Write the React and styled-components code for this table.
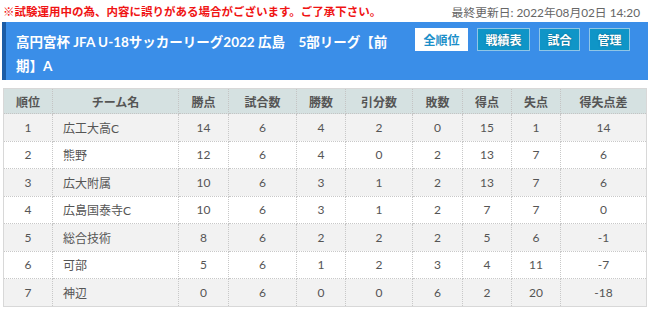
import React from "react";
import styled, { createGlobalStyle } from "styled-components";

const GlobalStyle = createGlobalStyle`
  body {
    margin: 0;
    background: #fff;
    font-family: Lato, "Noto Sans CJK JP", sans-serif;
  }
`;

const Page = styled.div`
  width: 650px;
  padding: 0 2px;
  box-sizing: border-box;
`;

const Notice = styled.div`
  height: 22px;
  display: flex;
  align-items: center;
  justify-content: space-between;
  padding: 0 8px 0 1px;
`;

const Warning = styled.span`
  color: #f01414;
  font-size: 11.5px;
  font-weight: bold;
`;

const Updated = styled.span`
  color: #666;
  font-size: 11.8px;
`;

const HeaderBox = styled.div`
  display: flex;
  justify-content: space-between;
  align-items: flex-start;
  background: #3a8ee8;
  border-left: 4px solid #1b5ca6;
  padding: 6px 18px 2px 10px;
`;

const Title = styled.h1`
  margin: 2px 0 0;
  width: 375px;
  color: #fff;
  font-size: 13.5px;
  font-weight: bold;
  line-height: 24px;
  line-break: anywhere;
  word-break: break-all;
`;

const Nav = styled.div`
  display: flex;
  gap: 9px;
`;

const NavButton = styled.a`
  display: flex;
  align-items: center;
  justify-content: center;
  height: 23px;
  padding: 0 7.5px;
  box-sizing: border-box;
  font-size: 12px;
  font-weight: bold;
  text-decoration: none;
  border: 1px solid ${(p) => (p.$active ? "#fff" : "#8fc6e6")};
  background: ${(p) => (p.$active ? "#fff" : "#0f95c7")};
  color: ${(p) => (p.$active ? "#1b8fc9" : "#fff")};
  text-shadow: ${(p) => (p.$active ? "none" : "0 0 2px rgba(0,0,0,0.35)")};
`;

const Table = styled.table`
  margin: 8px 0 0 1px;
  width: 643px;
  border-collapse: collapse;
  table-layout: fixed;
  border: 1px solid #d8d8d8;
  font-size: 12px;
  color: #555;
`;

const Th = styled.th`
  height: 24px;
  padding: 0;
  background: #d5e1e1;
  font-weight: bold;
  border: 1px dotted #c4c4c4;
  text-align: center;
`;

const Row = styled.tr`
  height: 27.5px;
  background: ${(p) => (p.$odd ? "#f2f2f2" : "#fff")};
`;

const Td = styled.td`
  padding: 0 ${(p) => (p.$left ? "10px" : "0")};
  border: 1px dotted #c8c8c8;
  text-align: ${(p) => (p.$left ? "left" : "center")};
`;

const columns = [
  ["順位", 49],
  ["チーム名", 126],
  ["勝点", 50],
  ["試合数", 68],
  ["勝数", 49],
  ["引分数", 67],
  ["敗数", 50],
  ["得点", 49],
  ["失点", 49],
  ["得失点差", 86],
];

const rows = [
  [1, "広工大高C", 14, 6, 4, 2, 0, 15, 1, 14],
  [2, "熊野", 12, 6, 4, 0, 2, 13, 7, 6],
  [3, "広大附属", 10, 6, 3, 1, 2, 13, 7, 6],
  [4, "広島国泰寺C", 10, 6, 3, 1, 2, 7, 7, 0],
  [5, "総合技術", 8, 6, 2, 2, 2, 5, 6, -1],
  [6, "可部", 5, 6, 1, 2, 3, 4, 11, -7],
  [7, "神辺", 0, 6, 0, 0, 6, 2, 20, -18],
];

const App = () => {
  return (
    <Page>
      <GlobalStyle />
      <Notice>
        <Warning>※試験運用中の為、内容に誤りがある場合がございます。ご了承下さい。</Warning>
        <Updated>最終更新日: 2022年08月02日 14:20</Updated>
      </Notice>
      <HeaderBox>
        <Title>高円宮杯 JFA U-18サッカーリーグ2022 広島　5部リーグ【前期】A</Title>
        <Nav>
          <NavButton $active>全順位</NavButton>
          <NavButton>戦績表</NavButton>
          <NavButton>試合</NavButton>
          <NavButton>管理</NavButton>
        </Nav>
      </HeaderBox>
      <Table>
        <colgroup>
          {columns.map(([name, w]) => (
            <col key={name} style={{ width: w }} />
          ))}
        </colgroup>
        <thead>
          <tr>
            {columns.map(([name]) => (
              <Th key={name}>{name}</Th>
            ))}
          </tr>
        </thead>
        <tbody>
          {rows.map((r, i) => (
            <Row key={r[0]} $odd={i % 2 === 0}>
              {r.map((v, j) => (
                <Td key={j} $left={j === 1}>
                  {v}
                </Td>
              ))}
            </Row>
          ))}
        </tbody>
      </Table>
    </Page>
  );
};

export default App;
